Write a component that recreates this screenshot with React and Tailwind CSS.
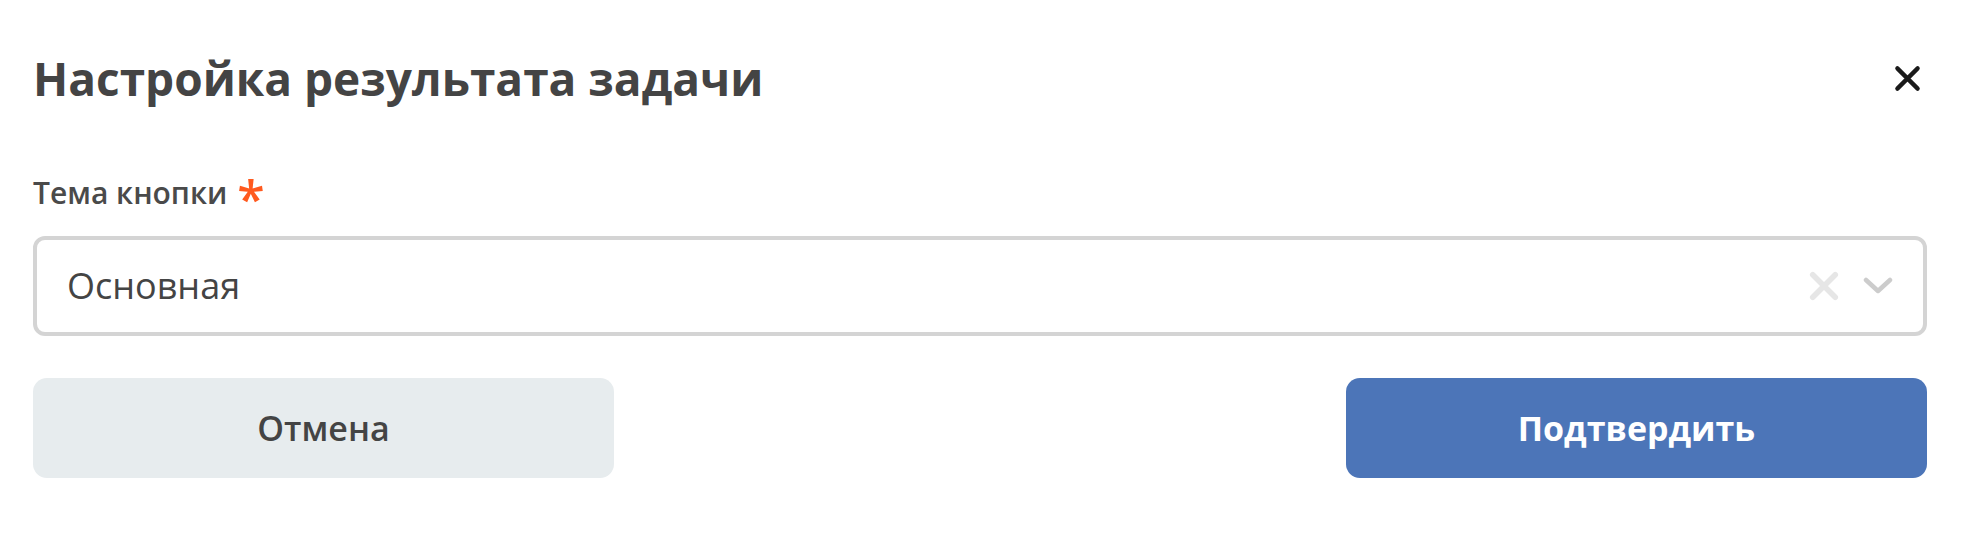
import React from 'react';

const font = { fontFamily: '"Open Sans", "Noto Sans", sans-serif' };

const CloseIcon = ({ className, width = 4 }) => (
    <svg viewBox="0 0 24 24" className={className} fill="none" stroke="currentColor" strokeWidth={width} strokeLinecap="round">
        <path d="M3 3 L21 21 M21 3 L3 21" />
    </svg>
);

const Chevron = ({ className }) => (
    <svg viewBox="0 0 30 18" className={className} fill="none" stroke="currentColor" strokeWidth="4.5" strokeLinecap="round" strokeLinejoin="round">
        <path d="M3 3 L15 14 L27 3" />
    </svg>
);

export default function App() {
    return (
        <div className="w-[1972px] h-[554px] bg-white text-[#444444] pl-[33px] pr-[45px]" style={font}>
            <div className="flex items-center justify-between pt-[50px]">
                <h2 className="text-[46px] leading-[56px] font-bold">Настройка результата задачи</h2>
                <button type="button" className="text-[#1a1a1a] mr-[6px]">
                    <CloseIcon className="w-[27px] h-[27px]" width={3.8} />
                </button>
            </div>

            <div className="mt-[68px]">
                <label className="flex items-center gap-[10px] text-[30px] leading-[38px] font-semibold text-[#4a4a4a]">
                    Тема кнопки
                    <span className="text-[#ff5a1f] text-[50px] leading-[38px] font-semibold translate-y-[5px]">*</span>
                </label>
                <div className="mt-[24px] h-[100px] rounded-[12px] border-[4px] border-[#d4d4d4] flex items-center pl-[30px] pr-[30px]">
                    <span className="flex-1 text-[36px] font-medium text-[#444444]">Основная</span>
                    <div className="flex items-center gap-[24px]">
                        <CloseIcon className="w-[30px] h-[30px] text-[#e6e6e6]" width={4.5} />
                        <Chevron className="w-[30px] h-[18px] text-[#cccccc]" />
                    </div>
                </div>
            </div>

            <div className="mt-[42px] flex justify-between">
                <button type="button" className="w-[581px] h-[100px] rounded-[14px] bg-[#e7ecee] text-[34px] font-semibold text-[#444444]">
                    Отмена
                </button>
                <button type="button" className="w-[581px] h-[100px] rounded-[14px] bg-[#4c75b8] text-[34px] font-bold text-white">
                    Подтвердить
                </button>
            </div>
        </div>
    );
}
